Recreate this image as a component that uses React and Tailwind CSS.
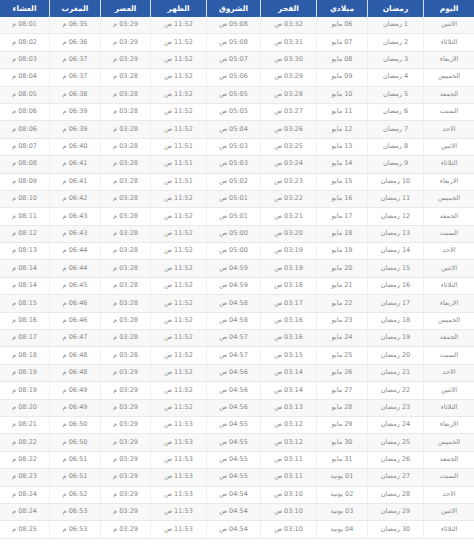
const cols = ["اليوم", "رمضان", "ميلادي", "الفجر", "الشروق", "الظهر", "العصر", "المغرب", "العشاء"];

const days = ["الاثنين", "الثلاثاء", "الاربعاء", "الخميس", "الجمعة", "السبت", "الاحد"];

// [ميلادي, الفجر, الشروق, الظهر, العصر, المغرب, العشاء]
const data = [
    ["06 مايو", "03:32", "05:08", "11:52", "03:29", "06:35", "08:01"],
    ["07 مايو", "03:31", "05:08", "11:52", "03:29", "06:36", "08:02"],
    ["08 مايو", "03:30", "05:07", "11:52", "03:29", "06:37", "08:03"],
    ["09 مايو", "03:29", "05:06", "11:52", "03:28", "06:37", "08:04"],
    ["10 مايو", "03:28", "05:05", "11:52", "03:28", "06:38", "08:05"],
    ["11 مايو", "03:27", "05:05", "11:52", "03:28", "06:39", "08:06"],
    ["12 مايو", "03:26", "05:04", "11:52", "03:28", "06:39", "08:06"],
    ["13 مايو", "03:25", "05:03", "11:51", "03:28", "06:40", "08:07"],
    ["14 مايو", "03:24", "05:03", "11:51", "03:28", "06:41", "08:08"],
    ["15 مايو", "03:23", "05:02", "11:51", "03:28", "06:41", "08:09"],
    ["16 مايو", "03:22", "05:01", "11:52", "03:28", "06:42", "08:10"],
    ["17 مايو", "03:21", "05:01", "11:52", "03:28", "06:43", "08:11"],
    ["18 مايو", "03:20", "05:00", "11:52", "03:28", "06:43", "08:12"],
    ["19 مايو", "03:19", "05:00", "11:52", "03:28", "06:44", "08:13"],
    ["20 مايو", "03:19", "04:59", "11:52", "03:28", "06:44", "08:14"],
    ["21 مايو", "03:18", "04:59", "11:52", "03:28", "06:45", "08:14"],
    ["22 مايو", "03:17", "04:58", "11:52", "03:28", "06:46", "08:15"],
    ["23 مايو", "03:16", "04:58", "11:52", "03:28", "06:46", "08:16"],
    ["24 مايو", "03:16", "04:57", "11:52", "03:28", "06:47", "08:17"],
    ["25 مايو", "03:15", "04:57", "11:52", "03:28", "06:48", "08:18"],
    ["26 مايو", "03:14", "04:56", "11:52", "03:29", "06:48", "08:19"],
    ["27 مايو", "03:14", "04:56", "11:52", "03:29", "06:49", "08:19"],
    ["28 مايو", "03:13", "04:56", "11:52", "03:29", "06:49", "08:20"],
    ["29 مايو", "03:12", "04:55", "11:53", "03:29", "06:50", "08:21"],
    ["30 مايو", "03:12", "04:55", "11:53", "03:29", "06:50", "08:22"],
    ["31 مايو", "03:11", "04:55", "11:53", "03:29", "06:51", "08:22"],
    ["01 يونية", "03:11", "04:55", "11:53", "03:29", "06:51", "08:23"],
    ["02 يونية", "03:10", "04:54", "11:53", "03:29", "06:52", "08:24"],
    ["03 يونية", "03:10", "04:54", "11:53", "03:29", "06:53", "08:24"],
    ["04 يونية", "03:10", "04:54", "11:53", "03:29", "06:53", "08:25"],
];

const grid = "grid grid-cols-[50px_56px_51px_56px_54px_56px_50px_51px_50px]";

export default function App() {
    return (
        <div
            dir="rtl"
            className="w-[474px] h-[549px] bg-white overflow-hidden"
            style={{ fontFamily: '"DejaVu Sans", sans-serif' }}
        >
            {/* HEADER */}
            <div className={`${grid} h-[17px] bg-[#2c5ca8]`}>
                {cols.map((c, i) => (
                    <div
                        key={c}
                        className={`flex items-center justify-center text-[7.5px] font-bold text-white ${i > 0 ? "border-r border-white/80" : ""}`}
                    >
                        {c}
                    </div>
                ))}
            </div>

            {/* ROWS */}
            {data.map((r, i) => {
                const cells = [
                    days[i % 7],
                    `${i + 1} رمضان`,
                    r[0],
                    `${r[1]} ص`,
                    `${r[2]} ص`,
                    `${r[3]} ص`,
                    `${r[4]} م`,
                    `${r[5]} م`,
                    `${r[6]} م`,
                ];
                return (
                    <div
                        key={i}
                        className={`${grid} h-[17.4px] border-b border-[#e9e9e9] ${i % 2 === 0 ? "bg-[#f8f8f8]" : "bg-white"}`}
                    >
                        {cells.map((t, j) => (
                            <div
                                key={j}
                                className={`flex items-center justify-center text-[6.5px] text-[#888] whitespace-nowrap ${j > 0 ? "border-r border-[#efefef]" : ""}`}
                            >
                                {t}
                            </div>
                        ))}
                    </div>
                );
            })}
        </div>
    );
}
